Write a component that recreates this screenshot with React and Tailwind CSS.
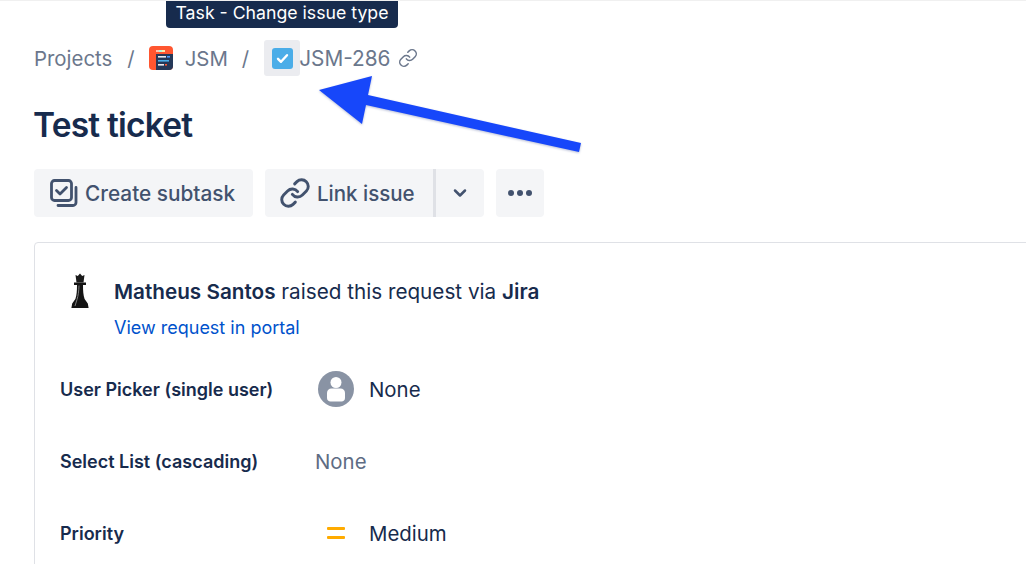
import React from "react";
import { Link as LinkIcon, ChevronDown } from "lucide-react";

function ProjectIcon() {
  return (
    <svg width="24" height="24" viewBox="0 0 24 24">
      <rect width="24" height="24" rx="4" fill="#FF5630" />
      <path d="M7 8h17v12a4 4 0 0 1-4 4H7z" fill="#253858" />
      <rect x="7" y="4" width="3" height="2" fill="#FFC2B0" />
      <rect x="10" y="4" width="3" height="2" fill="#B3F5D8" />
      <rect x="13" y="4" width="3" height="2" fill="#FFE9A8" />
      <rect x="9" y="10" width="8" height="1.600" fill="#EBECF0" />
      <rect x="18" y="10" width="3" height="1.600" fill="#4C9AFF" />
      <rect x="9" y="14" width="11" height="1.600" fill="#4BADE8" />
      <rect x="9" y="18" width="6" height="1.600" fill="#EBECF0" />
      <rect x="16" y="18" width="2" height="1.600" fill="#FF5630" />
    </svg>
  );
}

function TaskIcon() {
  return (
    <svg width="21" height="21" viewBox="0 0 21 21">
      <rect width="21" height="21" rx="3" fill="#4BADE8" />
      <path d="M6 10.800l3 3 6-6.600" fill="none" stroke="#fff" strokeWidth="2.400" strokeLinecap="round" strokeLinejoin="round" />
    </svg>
  );
}

function SubtaskIcon() {
  return (
    <svg width="28" height="28" viewBox="0 0 28 28" fill="none" stroke="#42526E" strokeWidth="2.800" strokeLinecap="round" strokeLinejoin="round">
      <rect x="1.500" y="1.500" width="20" height="20" rx="3" />
      <path d="M6.500 11.500l3.500 3.500 6.500-6.500" />
      <path d="M26 8.500v15a3 3 0 0 1-3 3H8" />
    </svg>
  );
}

function ChessPiece() {
  return (
    <svg width="20" height="36" viewBox="0 0 20 36">
      <path d="M5.500 2l2.300 1L10 .5 12.200 3l2.300-1-1 7.500h-7z" fill="#1a1a1a" />
      <path d="M4 9.500h12v2.500h-3c0 6 .3 10 1.600 14l3.200 4.500.8 4.500H1.400l.8-4.500L5.400 26C6.700 22 7 18 7 12H4z" fill="#141414" />
      <path d="M9 12.500c-.2 6-.8 10-2 14L5 33" stroke="#808080" strokeWidth="1" fill="none" />
    </svg>
  );
}

function AvatarIcon() {
  return (
    <svg width="36" height="36" viewBox="0 0 36 36">
      <circle cx="18" cy="18" r="18" fill="#8993A4" />
      <circle cx="18" cy="11.500" r="5.500" fill="#fff" />
      <path d="M9 22c0-3 2-4.500 4.500-4.500h9c2.500 0 4.500 1.500 4.500 4.500v5c0 2-1.500 3.500-3.500 3.500h-11C10.500 30.500 9 29 9 27z" fill="#fff" />
    </svg>
  );
}

function Row({ label, children }) {
  return (
    <div className="flex items-center h-[72px]">
      <div className="w-[283px] pl-[25px] text-[18px] font-semibold text-[#172B4D] whitespace-nowrap">{label}</div>
      {children}
    </div>
  );
}

export default function App() {
  return (
    <div
      className="relative w-[1026px] h-[564px] overflow-hidden bg-white border-t border-[#f0f0f0] pl-[34px]"
      style={{ fontFamily: "Inter, 'Noto Sans', sans-serif" }}
    >
      <div className="absolute left-[166px] top-0 h-[27px] w-[232px] rounded-b-[4px] bg-[#172B4D] text-white text-[17.700px] leading-[24px] text-center whitespace-nowrap">
        Task - Change issue type
      </div>

      <div className="flex items-center h-[36px] mt-[39px] text-[20.400px] text-[#6B778C] whitespace-nowrap">
        <span className="relative top-px">Projects</span>
        <span className="ml-[15px] relative top-px">/</span>
        <span className="ml-[14px] flex"><ProjectIcon /></span>
        <span className="ml-[12px] relative top-px">JSM</span>
        <span className="ml-[14px] relative top-px">/</span>
        <span className="ml-[15px] w-[36px] h-[36px] rounded-[3px] bg-[#EBECF0] flex items-center justify-center"><TaskIcon /></span>
        <span className="relative top-px -ml-[1px] text-[20.800px]">JSM-286</span>
        <LinkIcon className="ml-[8px]" size={20} strokeWidth={1.800} color="#6B778C" />
      </div>

      <h1 className="mt-[26px] -ml-[1px] text-[33.500px] leading-[46px] font-semibold text-[#172B4D] tracking-[-0.800px]">Test ticket</h1>

      <div className="flex mt-[21px] h-[48px] text-[20.800px] font-medium text-[#42526E] whitespace-nowrap">
        <div className="w-[219px] rounded-[4px] bg-[#F4F5F7] flex items-center pl-[16px]">
          <SubtaskIcon />
          <span className="ml-[7px] relative top-px">Create subtask</span>
        </div>
        <div className="ml-[12px] w-[219px] rounded-[4px] bg-[#F4F5F7] flex items-center pl-[14px]">
          <LinkIcon size={32} strokeWidth={2.200} color="#42526E" />
          <span className="ml-[6px] w-[116px] text-[20.500px] relative top-px">Link issue</span>
          <div className="w-[3px] h-[48px] bg-[#DFE1E6]" />
          <ChevronDown className="ml-[14px]" size={20} strokeWidth={3} color="#42526E" />
        </div>
        <div className="ml-[12px] w-[48px] rounded-[4px] bg-[#F4F5F7] flex items-center justify-center gap-[3px]">
          <span className="w-[6px] h-[6px] rounded-full bg-[#42526E]" />
          <span className="w-[6px] h-[6px] rounded-full bg-[#42526E]" />
          <span className="w-[6px] h-[6px] rounded-full bg-[#42526E]" />
        </div>
      </div>

      <div className="mt-[25px] w-[1100px] h-[400px] border border-[#DFE1E6] rounded-[4px]">
        <div className="flex items-start pt-[30px] pl-[35px]">
          <ChessPiece />
          <div className="ml-[24px] pt-[7px]">
            <div className="text-[20.700px] leading-[24px] text-[#172B4D] whitespace-nowrap">
              <span className="font-semibold">Matheus Santos</span> raised this request via <span className="font-semibold">Jira</span>
            </div>
            <div className="mt-[12px] text-[18px] leading-[24px] text-[#0052CC]">View request in portal</div>
          </div>
        </div>
        <div className="mt-[13px]">
          <Row label="User Picker (single user)">
            <AvatarIcon />
            <span className="ml-[15px] text-[20.400px] text-[#172B4D] relative top-px">None</span>
          </Row>
          <Row label="Select List (cascading)">
            <span className="text-[20.400px] text-[#5E6C84] -ml-[3px] relative top-px">None</span>
          </Row>
          <Row label="Priority">
            <span className="ml-[9px] w-[18px] flex flex-col gap-[6px]">
              <span className="h-[3px] bg-[#FFAB00] rounded-[1px]" />
              <span className="h-[3px] bg-[#FFAB00] rounded-[1px]" />
            </span>
            <span className="ml-[24px] text-[20.400px] text-[#172B4D] relative top-px">Medium</span>
          </Row>
        </div>
      </div>

      <svg className="absolute left-0 top-0" width="1026" height="564" style={{ filter: "drop-shadow(0 1px 1px rgba(20,40,120,0.3))" }}>
        <polygon points="319,89 372,75 368,94 581,142 579,151 366,104 362,123" fill="#1747FA" />
      </svg>
    </div>
  );
}
